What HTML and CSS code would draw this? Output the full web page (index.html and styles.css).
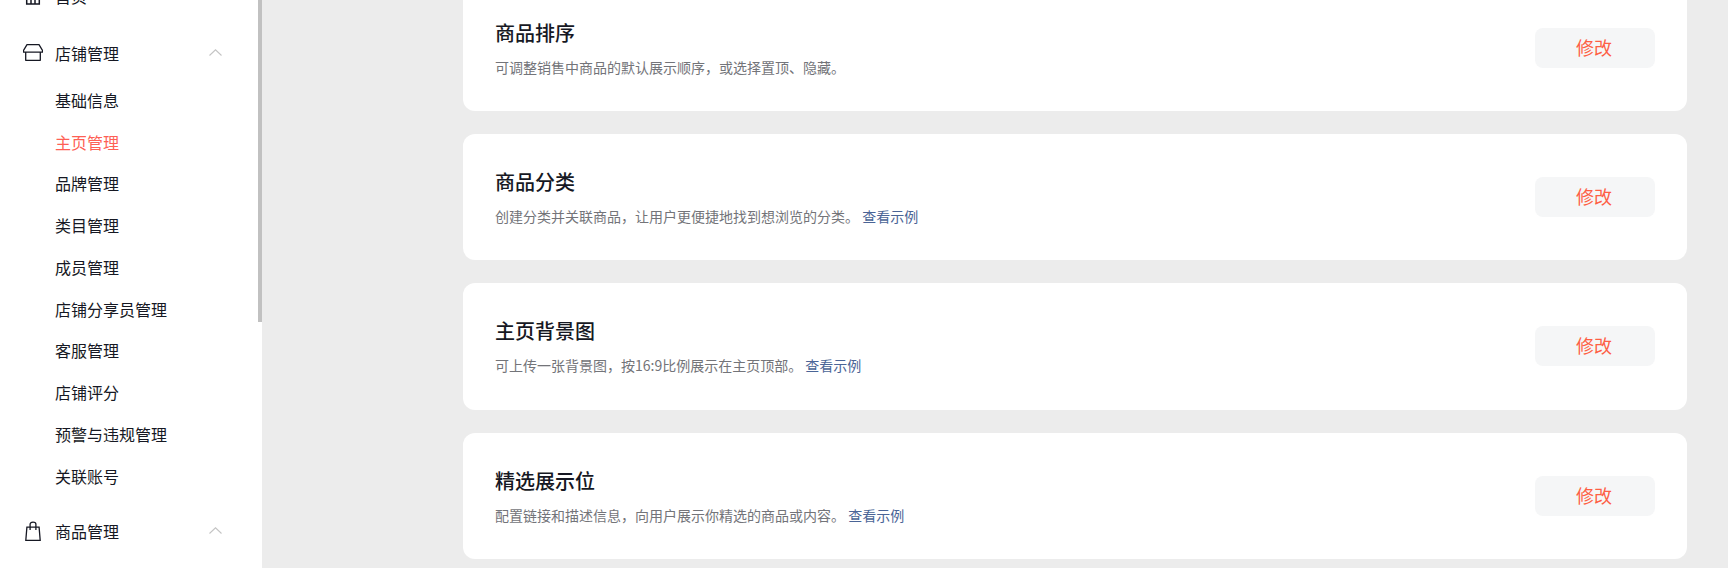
FILE: index.html
```html
<!DOCTYPE html>
<html lang="zh-CN">
<head>
<meta charset="utf-8">
<title>店铺管理</title>
<link rel="stylesheet" href="styles.css">
</head>
<body>
<div class="app">
  <aside class="sidebar">
    <nav class="menu">
      <div class="group-head first">
        <svg class="ico" viewBox="0 0 20 20"><path d="M2 9 10 2l8 7M3.700 7.500V18h12.600V7.500M8 18v-5h4v5" fill="none" stroke="#161823" stroke-width="1.500"/></svg>
        <span>首页</span>
      </div>
      <div class="group-head store">
        <svg class="ico" viewBox="0 0 20 20"><path d="M4 1.700h12L19.500 7.500v1.700H.5V7.500zM2.700 9.200v8.100h14.600V9.200" fill="none" stroke="#161823" stroke-width="1.300" stroke-linejoin="round"/></svg>
        <span>店铺管理</span>
        <svg class="chev chev-store" viewBox="0 0 13 7"><path d="M.5 6.500 6.500.8l6 5.700" fill="none" stroke="#c4c4c4" stroke-width="1.100"/></svg>
      </div>
      <a class="sub">基础信息</a>
      <a class="sub active">主页管理</a>
      <a class="sub">品牌管理</a>
      <a class="sub">类目管理</a>
      <a class="sub">成员管理</a>
      <a class="sub">店铺分享员管理</a>
      <a class="sub">客服管理</a>
      <a class="sub">店铺评分</a>
      <a class="sub">预警与违规管理</a>
      <a class="sub">关联账号</a>
      <div class="group-head goods">
        <svg class="ico" viewBox="0 0 20 20"><path d="M3.900 6.200h12.200l1.100 13.200H2.800zM7.100 9V3.300Q7.100 1.200 10 1.200t2.900 2.100V9" fill="none" stroke="#161823" stroke-width="1.300"/></svg>
        <span>商品管理</span>
        <svg class="chev chev-goods" viewBox="0 0 13 7"><path d="M.5 6.500 6.500.8l6 5.700" fill="none" stroke="#c4c4c4" stroke-width="1.100"/></svg>
      </div>
    </nav>
    <div class="thumb"></div>
  </aside>
  <main class="content">
    <section class="card c1">
      <div class="info"><h3>商品排序</h3><p>可调整销售中商品的默认展示顺序，或选择置顶、隐藏。</p></div>
      <button class="edit">修改</button>
    </section>
    <section class="card">
      <div class="info"><h3>商品分类</h3><p>创建分类并关联商品，让用户更便捷地找到想浏览的分类。 <a>查看示例</a></p></div>
      <button class="edit">修改</button>
    </section>
    <section class="card">
      <div class="info"><h3>主页背景图</h3><p>可上传一张背景图，按16:9比例展示在主页顶部。 <a>查看示例</a></p></div>
      <button class="edit">修改</button>
    </section>
    <section class="card">
      <div class="info"><h3>精选展示位</h3><p>配置链接和描述信息，向用户展示你精选的商品或内容。 <a>查看示例</a></p></div>
      <button class="edit">修改</button>
    </section>
  </main>
</div>
</body>
</html>
```
FILE: styles.css
```css
* { box-sizing: border-box; }
html, body { margin: 0; height: 100%; overflow: hidden; }
body {
  background: #ececec;
  font-family: "Noto Sans CJK SC", "Liberation Sans", sans-serif;
  color: #161823;
}
.app { display: flex; height: 568px; overflow: hidden; }
.sidebar {
  position: relative;
  flex: 0 0 262px;
  height: 568px;
  background: #fff;
  overflow: hidden;
}
.thumb {
  position: absolute;
  top: 0;
  right: 0;
  width: 4px;
  height: 322px;
  background: #c1c1c1;
}
.menu { display: flex; flex-direction: column; padding-left: 23px; font-size: 16px; line-height: 24px; }
.group-head { display: flex; flex: none; align-items: center; height: 24px; }
.group-head.first { margin-top: -16px; }
.group-head.store { margin-top: 33px; }
.group-head.goods { margin-top: 22.600px; }
.ico { width: 20px; height: 20px; flex: none; margin-right: 12px; }
.chev { width: 13px; height: 7px; margin-left: auto; margin-right: 40px; flex: none; }
.chev-store { margin-bottom: 1px; }
.sub { display: block; flex: none; height: 41.740px; line-height: 24px; padding: 9px 0 0 32px; }
.store + .sub { margin-top: 14px; }
.sub.active { color: #fe5f55; }
.content {
  flex: 1;
  display: flex;
  flex-direction: column;
  gap: 23px;
  padding: 0 41px 0 201px;
  height: 568px;
  overflow: hidden;
}
.card {
  display: flex;
  align-items: center;
  justify-content: space-between;
  flex: none;
  height: 126.400px;
  padding: 0 32px;
  background: #fff;
  border-radius: 12px;
}
.card.c1 { margin-top: -15.600px; }
.info h3 { margin: 0; font-size: 20px; font-weight: 500; line-height: 28px; color: #161823; }
.info p { margin: 10px 0 0; font-size: 14px; line-height: 20px; color: #737479; }
.info a { color: #4a6496; }
.edit {
  flex: none;
  width: 120px;
  height: 40px;
  border: 0;
  border-radius: 8px;
  padding: 0 2px 2px 0;
  background: #f5f6f7;
  color: #fe5f45;
  font: 18px "Noto Sans CJK SC", "Liberation Sans", sans-serif;
}
```
